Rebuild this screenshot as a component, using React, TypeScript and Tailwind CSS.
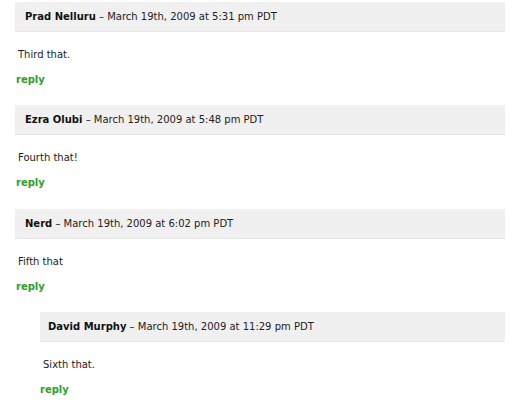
const comments = [
  { author: "Prad Nelluru", date: "March 19th, 2009 at 5:31 pm PDT", text: "Third that.", nested: false },
  { author: "Ezra Olubi", date: "March 19th, 2009 at 5:48 pm PDT", text: "Fourth that!", nested: false },
  { author: "Nerd", date: "March 19th, 2009 at 6:02 pm PDT", text: "Fifth that", nested: false },
  { author: "David Murphy", date: "March 19th, 2009 at 11:29 pm PDT", text: "Sixth that.", nested: true },
];

const App = () => {
  return (
    <div className="w-[512px] h-[402px] overflow-hidden bg-white pt-[2px] pr-[7px] text-[10px] text-[#222] font-['DejaVu_Sans',sans-serif]">
      {comments.map((c, id) => (
        <div key={id} className={`h-[103.4px] ${c.nested ? "pl-10" : "pl-[15px]"}`}>
          {/* comment header */}
          <div className={`h-[30px] bg-[#f0f0f0] border-b border-[#e6e6e6] flex items-center ${c.nested ? "pl-[8px]" : "pl-[10px]"}`}>
            <span className="font-bold text-[#111]">{c.author}</span>
            <span className="text-[#222]">&nbsp;– {c.date}</span>
          </div>
          <p className="mt-[17px] pl-[3px] leading-[12px]">{c.text}</p>
          <a href="#" className={`block mt-[13px] font-bold text-[#2ca02c] leading-[12px] ${c.nested ? "" : "pl-px"}`}>
            reply
          </a>
        </div>
      ))}
    </div>
  );
};

export default App;
